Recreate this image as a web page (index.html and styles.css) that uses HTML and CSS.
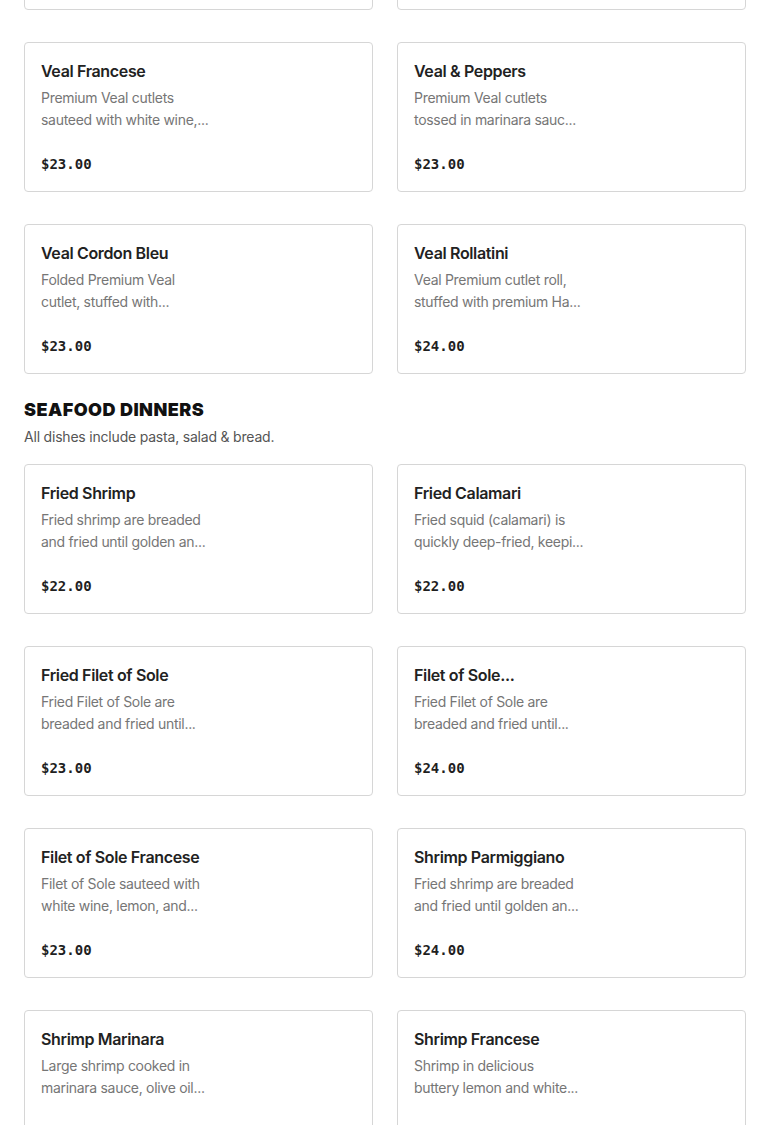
FILE: index.html
```html
<!DOCTYPE html>
<html lang="en">
<head>
<meta charset="utf-8">
<title>Menu</title>
<link rel="stylesheet" href="styles.css">
</head>
<body>
<main class="menu">
  <section class="section">
    <div class="grid">
      <article class="card"><h3 class="title">Veal Parmigiano</h3><p class="desc"><span>Premium Veal cutlets</span><span>breaded and fried,...</span></p><p class="price">$23.00</p></article>
      <article class="card"><h3 class="title">Veal Marsala</h3><p class="desc"><span>Premium Veal cutlets</span><span>sauteed with marsala...</span></p><p class="price">$23.00</p></article>
      <article class="card"><h3 class="title">Veal Francese</h3><p class="desc"><span>Premium Veal cutlets</span><span>sauteed with white wine,...</span></p><p class="price">$23.00</p></article>
      <article class="card"><h3 class="title">Veal &amp; Peppers</h3><p class="desc"><span>Premium Veal cutlets</span><span>tossed in marinara sauc...</span></p><p class="price">$23.00</p></article>
      <article class="card"><h3 class="title">Veal Cordon Bleu</h3><p class="desc"><span>Folded Premium Veal</span><span>cutlet, stuffed with...</span></p><p class="price">$23.00</p></article>
      <article class="card"><h3 class="title">Veal Rollatini</h3><p class="desc"><span>Veal Premium cutlet roll,</span><span>stuffed with premium Ha...</span></p><p class="price">$24.00</p></article>
    </div>
  </section>
  <section class="section">
    <h2 class="section-title">SEAFOOD DINNERS</h2>
    <p class="section-note">All dishes include pasta, salad &amp; bread.</p>
    <div class="grid">
      <article class="card"><h3 class="title">Fried Shrimp</h3><p class="desc"><span>Fried shrimp are breaded</span><span>and fried until golden an...</span></p><p class="price">$22.00</p></article>
      <article class="card"><h3 class="title">Fried Calamari</h3><p class="desc"><span>Fried squid (calamari) is</span><span>quickly deep-fried, keepi...</span></p><p class="price">$22.00</p></article>
      <article class="card"><h3 class="title">Fried Filet of Sole</h3><p class="desc"><span>Fried Filet of Sole are</span><span>breaded and fried until...</span></p><p class="price">$23.00</p></article>
      <article class="card"><h3 class="title">Filet of Sole...</h3><p class="desc"><span>Fried Filet of Sole are</span><span>breaded and fried until...</span></p><p class="price">$24.00</p></article>
      <article class="card"><h3 class="title">Filet of Sole Francese</h3><p class="desc"><span>Filet of Sole sauteed with</span><span>white wine, lemon, and...</span></p><p class="price">$23.00</p></article>
      <article class="card"><h3 class="title">Shrimp Parmiggiano</h3><p class="desc"><span>Fried shrimp are breaded</span><span>and fried until golden an...</span></p><p class="price">$24.00</p></article>
      <article class="card loading"><h3 class="title">Shrimp Marinara</h3><p class="desc"><span>Large shrimp cooked in</span><span>marinara sauce, olive oil...</span></p><p class="price">$23.00</p></article>
      <article class="card loading"><h3 class="title">Shrimp Francese</h3><p class="desc"><span>Shrimp in delicious</span><span>buttery lemon and white...</span></p><p class="price">$24.00</p></article>
    </div>
  </section>
</main>
</body>
</html>
```
FILE: styles.css
```css
* { box-sizing: border-box; }
html, body { margin: 0; padding: 0; background: #fff; }
body {
  font-family: Inter, "Noto Sans", "Liberation Sans", sans-serif;
  color: #1f1f1f;
  overflow: hidden;
}
.menu {
  padding: 0 24px;
  margin-top: -140px;
}
.section { margin-top: 24px; }
.section:first-child { margin-top: 0; }
.section-title {
  margin: 0;
  font-size: 18px;
  line-height: 24px;
  font-weight: 900;
  letter-spacing: 0.45px;
  color: #111;
}
.section-note {
  margin: 4px 0 16px;
  font-size: 14px;
  line-height: 22px;
  letter-spacing: -0.2px;
  color: #555;
}
.grid {
  display: grid;
  grid-template-columns: 1fr 1fr;
  column-gap: 24px;
  row-gap: 32px;
}
.card {
  border: 1px solid #d6d6d6;
  border-radius: 4px;
  padding: 16px;
  height: 150px;
  display: flex;
  flex-direction: column;
}
.title {
  margin: 0;
  font-size: 16px;
  line-height: 24px;
  font-weight: 600;
  letter-spacing: -0.35px;
  color: #222;
  white-space: nowrap;
}
.desc {
  margin: 4px 0 22px;
  font-size: 14px;
  line-height: 22px;
  letter-spacing: -0.3px;
  color: #767676;
  display: flex;
  flex-direction: column;
}
.desc span { white-space: nowrap; }
.price {
  margin: 0;
  font-family: "DejaVu Sans Mono", "Liberation Mono", monospace;
  font-size: 14px;
  line-height: 22px;
  font-weight: 700;
  color: #1f1f1f;
}
.loading .price { color: #ededed; }
```
